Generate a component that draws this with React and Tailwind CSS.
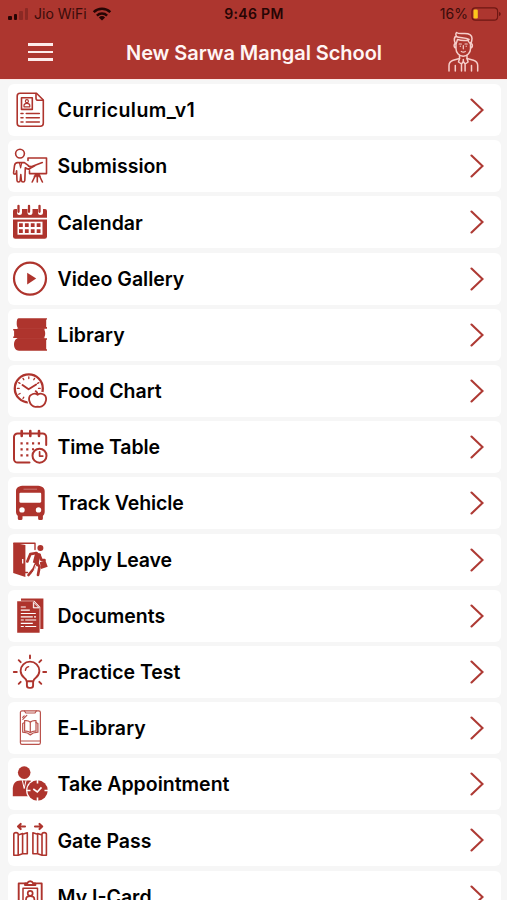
import React from "react";

const strokeProps = {
  fill: "none",
  stroke: "currentColor",
  strokeWidth: 1.6,
  strokeLinecap: "round",
  strokeLinejoin: "round",
};

function Icon({ children }) {
  return (
    <svg viewBox="0 0 36 36" className="size-9 shrink-0 text-[#ae342d]" fill="currentColor" aria-hidden="true">
      {children}
    </svg>
  );
}

function CurriculumIcon() {
  return (
    <Icon>
      <g {...strokeProps}>
        <path d="M8 1.2h16.5l6.8 6.8v23.3a3 3 0 0 1-3 3H8.2a3 3 0 0 1-3-3V4a2.8 2.8 0 0 1 2.8-2.8Z" />
        <path d="M24 1.5v4.8a2 2 0 0 0 2 2h5" />
        <path d="M9.5 5.8h10.8v11.6H9.5z" />
        <path d="M12 14.8v-1.2c0-1.4 1-2.2 2.9-2.2s2.9.8 2.9 2.2v1.2z" strokeWidth="1.2" />
        <circle cx="14.9" cy="9.2" r="1.5" strokeWidth="1.2" />
        <path d="M9 21.5h2M14.3 21.5h13M9 25.8h2M14.3 25.8h13M9 30h2M14.3 30h13" />
      </g>
    </Icon>
  );
}

function SubmissionIcon() {
  return (
    <Icon>
      <g {...strokeProps}>
        <circle cx="8" cy="5.6" r="4.4" />
        <path d="M16.5 17.6 12.4 14.600H5.600c-2 0-2.800 1.200-3.100 3l-.9 7c-.2 1.800 2 2 2.500.3l.5-2.200.4 9.800c.1 2 3 2 3.200 0l.6-6 .6 6c.2 2 3.200 2 3.400 0l.5-12.700 2.500 1.100c1 .4 2 .2 2.500-.8" />
        <path d="M7.500 14.800 8.600 20l1.100-5.200" strokeWidth="1.2" />
        <path d="M16 12.500v-2.500h18.500v15.600H17.500v-2.800M16.500 18.300l3.300.3 10.500-4M16.800 21l6-3.200" />
        <path d="M25.300 26v8M23.800 26.500 20.200 34M26.800 26.500l3.600 7.500" />
        <path d="M23.200 26.300h4.400l1 2.500h-6.400z" fill="currentColor" strokeWidth=".5" />
      </g>
    </Icon>
  );
}

function CalendarIcon() {
  return (
    <Icon>
      <path d="M3 5h30a2 2 0 0 1 2 2v6.700H1V7a2 2 0 0 1 2-2Z" />
      <path d="M1 15.400h34v17a2.300 2.300 0 0 1-2.300 2.300H3.300A2.300 2.300 0 0 1 1 32.400z" />
      <path d="M7.500 3v5.500M18 3v5.500M28.500 3v5.500" stroke="white" strokeWidth="5" strokeLinecap="round" />
      <path d="M6.500 1.800v6M17 1.800v6M27.500 1.800v6" stroke="currentColor" strokeWidth="2.300" strokeLinecap="round" />
      <path d="M5.500 17.700h25v13h-25z" fill="white" />
      <path d="M7 19.300h3.800v3.700H7zM12.900 19.300h3.800v3.700h-3.800zM18.800 19.300h3.800v3.700h-3.800zM24.700 19.300h3.800v3.700h-3.800zM7 25.200h3.800v3.700H7zM12.900 25.200h3.800v3.700h-3.800zM18.800 25.200h3.800v3.700h-3.800zM24.700 25.200h3.800v3.700h-3.800z" />
    </Icon>
  );
}

function VideoIcon() {
  return (
    <Icon>
      <circle cx="18" cy="17.6" r="16" {...strokeProps} strokeWidth="2.2" />
      <path d="M15.200 11.800v11.600l9-5.800z" />
    </Icon>
  );
}

function LibraryIcon() {
  return (
    <Icon>
      <path d="M6.500 1.200H35v1.200h-.8v7.700h.8v1.600H7.500C5.600 11.700 4.700 9 4.700 6.400c0-2.800.4-5.200 1.800-5.200Z" />
      <path d="M1.200 12.100H31.500c1.200.8 1.700 2.400 1.700 4.400 0 2.200-.5 3.700-1.700 4.400H1.200v-1.500h.9v-5.800h-.9z" />
      <path d="M6.500 21.300H35v1.500h-.8v9.500h.8v1.500H7c-3 0-5-2.500-5-6.200 0-3.800 1.800-6.300 4.500-6.300Z" />
      <path d="M5.500 11h27v2h-27zM5.500 20.300h27v1.800h-27z" opacity=".85" />
    </Icon>
  );
}

function FoodIcon() {
  return (
    <Icon>
      <circle cx="16.8" cy="15.4" r="14" {...strokeProps} strokeWidth="2.3" />
      <path {...strokeProps} strokeWidth="1.3" d="M16.800 3.800v1.800M22.600 5.400l-.8 1.300M11 5.400l.8 1.300M26.900 9.600l-1.300.8M6.700 9.600l1.300.8M28.200 15.400h-1.700M5.400 15.400h1.800M6.700 21.300l1.400-.8M11 25.500l.8-1.300" />
      <path {...strokeProps} strokeWidth="1.9" d="m10.500 12 6.100 4.300 7.600-4.800" />
      <path
        d="M25.600 21.800c1.300-1 3-1.400 4.800-.8 2.800.9 4.200 3.700 3.500 6.800-.7 3.300-3.500 6.200-6.300 6-1.400-.1-2.600-.1-4 0-2.800.2-5.600-2.700-6.300-6-.7-3.100.7-5.900 3.500-6.800 1.800-.6 3.500-.2 4.800.8Z"
        fill="white"
        stroke="white"
        strokeWidth="4"
      />
      <path {...strokeProps} strokeWidth="1.8" d="M25.600 21.800c1.300-1 3-1.400 4.800-.8 2.800.9 4.200 3.700 3.500 6.800-.7 3.300-3.500 6.200-6.300 6-1.400-.1-2.600-.1-4 0-2.800.2-5.600-2.700-6.300-6-.7-3.100.7-5.900 3.500-6.800 1.800-.6 3.500-.2 4.800.8Zm0 0c0-1.800-.6-3-1.900-3.700" />
    </Icon>
  );
}

function TimeTableIcon() {
  return (
    <Icon>
      <g {...strokeProps} strokeWidth="2">
        <path d="M17.500 33.500H5.600A3.600 3.600 0 0 1 2 29.900V8a3.600 3.600 0 0 1 3.600-3.600h25A3.600 3.600 0 0 1 34.200 8v8" />
        <circle cx="27.500" cy="26.700" r="7" />
        <path d="M27.600 22.800v4.300h3.200" strokeWidth="1.7" />
      </g>
      <path {...strokeProps} strokeWidth="2.6" d="M9.700 2v5M18.300 2v5M27 2v5" />
      <path d="M8.500 13.200h2.200v2.200H8.500zM14.200 13.200h2.200v2.200h-2.200zM20 13.200h2.200v2.200H20zM25.800 13.200H28v2.200h-2.200zM8.500 19.200h2.200v2.200H8.500zM14.200 19.200h2.200v2.200h-2.200zM20 19.200h2v2h-2zM8.500 25.200h2.200v2.200H8.500zM14.200 25.200h2.200v2.200h-2.200z" />
    </Icon>
  );
}

function BusIcon() {
  return (
    <Icon>
      <path
        fillRule="evenodd"
        d="M12 .7h12.500c4.800 0 8.200 1.500 8.200 5.500v20.600c0 1.500-.5 3-1.800 4v2.700a1.500 1.500 0 0 1-1.500 1.500h-1.800a1.500 1.500 0 0 1-1.500-1.500v-2.200H10.500v2.200A1.500 1.500 0 0 1 9 35H7.300a1.500 1.500 0 0 1-1.500-1.500v-2.700c-1.300-1-1.800-2.500-1.800-4V6.200C4 2.200 7.200.7 12 .7Zm-3.400 7A1.200 1.200 0 0 0 7.400 9v7.600c0 .7.5 1.200 1.200 1.200H28c.7 0 1.200-.5 1.200-1.200V9c0-.8-.5-1.300-1.200-1.300zM10 22.200a2.700 2.700 0 1 0 0 5.400 2.700 2.700 0 0 0 0-5.400Zm16.500 0a2.700 2.700 0 1 0 0 5.400 2.700 2.700 0 0 0 0-5.400Z"
      />
      <path d="M11.500 4.200h13.500" stroke="white" strokeWidth=".8" opacity=".4" />
    </Icon>
  );
}

function LeaveIcon() {
  return (
    <Icon>
      <path d="M1.200.8 13.400 3v32L1.200 31z" />
      <path d="M2 1.200h21v6.300M13 30.500h2.500" {...strokeProps} strokeWidth="1.400" />
      <path d="M10.700 17v4.500" stroke="white" strokeWidth="1.300" />
      <circle cx="28.400" cy="6" r="3" />
      <path d="M24.500 20.500l-2.800 6.300-5.200 6.200M25 21l2.500 4-1.500 8M24.500 11l-6.200 1.200-3 7.200M27.500 13l1.800 4.800 3.200.4" {...strokeProps} strokeWidth="2.700" />
      <path d="m23.500 9.700 5.300 2.300-2.300 10-5.700-1.500z" />
      <path d="m27.800 20.300 5.600-1.900 2.300 6.300-6.600 2.300z" />
      <path d="m23.800 22.800-1.500 5.300-2.300 4.400M20.300 14.300l-1.500 5" stroke="white" strokeWidth=".9" fill="none" />
    </Icon>
  );
}

function DocumentsIcon() {
  return (
    <Icon>
      <path d="M9 .5h22.400v30.500H9z" />
      <path d="M4.800 2.800h17.500l6 6.200v26.200H4.800z" fill="white" />
      <path d="M5.200 3.300h16.200l6.200 6.400v25H5.200z" />
      <path d="M21.300 4v6h6" fill="white" stroke="white" strokeWidth=".7" />
      <path d="m22.200 5.500 3.700 3.700h-3.700z" />
      <path d="M8.800 9h5M8.800 12.200h9M8.800 15.500h15M8.800 18.800h12M22 18.800h2M8.800 22h3M13.200 22h11M8.800 25.300h12M8.800 28.500h3M13.200 28.500h11" stroke="white" strokeWidth="1.200" />
    </Icon>
  );
}

function BulbIcon() {
  return (
    <Icon>
      <g {...strokeProps} strokeWidth="1.9">
        <path d="M14.600 27.200c0-1.700-.8-2.300-2.400-3.500A9 9 0 0 1 8.600 17a9.400 9.400 0 0 1 18.800 0 9 9 0 0 1-3.600 6.700c-1.600 1.200-2.400 1.800-2.400 3.500z" />
        <path d="M14.900 28v3.600c0 1.500 1 2.300 2.300 2.300h1.600c1.300 0 2.300-.8 2.300-2.300V28" />
        <path d="M13.400 16.400c.2-2 1.400-3.200 3.200-3.700" strokeWidth="1.400" />
        <path d="M18 1.500v2.700M1.800 18h3M31.200 18h3M6.700 6.200l2 2M29.300 6.200l-2 2M6.700 29.800l2-2M29.300 29.800l-2-2" />
      </g>
    </Icon>
  );
}

function ELibraryIcon() {
  return (
    <Icon>
      <g {...strokeProps} strokeWidth="1.200" opacity=".85">
        <rect x="8.400" y=".9" width="20" height="33.500" rx="1.600" />
        <path d="M12.500 1l1.300 2h9.200l1.300-2M8.500 31h19.800M10.700 7.400l1.500-1.500M10.800 9.400l4-4" />
        <path d="M18.300 12.200c-1.600-1.500-3.700-1.900-5.700-1.500v10.500c2-.3 4.100 0 5.700 1.500 1.600-1.500 3.700-1.800 5.700-1.500V10.700c-2-.4-4.100 0-5.700 1.500Zm0 0v10.500" />
        <path d="M12.600 12.500l-1.900 1v8.700l4.800.8 2.800 2 2.800-2 4.800-.8v-8.700l-1.900-1" />
      </g>
    </Icon>
  );
}

function AppointmentIcon() {
  return (
    <Icon>
      <circle cx="12.200" cy="6.600" r="6.300" />
      <path d="M.8 30.200v-7.400c0-5 2.700-8.300 7.500-8.300h8c4.800 0 7.400 2.600 7.400 7.600v8.100z" />
      <path d="m10.300 14.200 1.900 8.300 1.900-8.300" stroke="white" strokeWidth="1" fill="none" />
      <circle cx="25.500" cy="24.500" r="11.400" fill="white" />
      <circle cx="25.500" cy="24.500" r="10.200" />
      <path d="M25.500 14v3.500M25.500 31.500V35M15 24.500h3.500M32.500 24.500H36M21.300 23l4 3 4.200-4.600" stroke="white" strokeWidth="1.600" fill="none" />
    </Icon>
  );
}

function GateIcon() {
  return (
    <Icon>
      <g {...strokeProps}>
        <path d="M13 4.500H6M8.700 1.900 6 4.500l2.700 2.600M23 4.500h7.200M27.500 1.900l2.700 2.600-2.700 2.600" strokeWidth="2.100" />
        <path d="M1.800 12.300c0-2.300 4.400-2.300 4.400 0v21H1.800zM6.200 13l4.400-1.500v20.300l-4.400 1.400M10.600 12.200l4.700-1.500v21h-4.700" />
        <path d="M34.400 12.300c0-2.300-4.400-2.300-4.400 0v21h4.400zM30 13l-4.400-1.500v20.300l4.400 1.400M25.600 12.200l-4.700-1.500v21h4.700" />
      </g>
    </Icon>
  );
}

function CardIcon() {
  return (
    <Icon>
      <g {...strokeProps} strokeWidth="1.900">
        <path d="M13 4.400H6.700v31M23.400 4.400h6.300v31M13 6V4.200h2.400a3 3 0 0 1 5.600 0h2.400V6z" />
        <path d="M11 36V9.300h14.500V36" strokeWidth="1.500" />
        <circle cx="18.200" cy="14.300" r="2.500" strokeWidth="1.700" />
        <path d="M14 22v-1.500c0-2 1.700-3.300 4.200-3.300s4.200 1.300 4.200 3.300V22" strokeWidth="1.700" />
      </g>
    </Icon>
  );
}

const menuItems = [
  { label: "Curriculum_v1", icon: CurriculumIcon, tracking: "tracking-[0.4px]" },
  { label: "Submission", icon: SubmissionIcon },
  { label: "Calendar", icon: CalendarIcon },
  { label: "Video Gallery", icon: VideoIcon },
  { label: "Library", icon: LibraryIcon, tracking: "tracking-[0.1px]" },
  { label: "Food Chart", icon: FoodIcon },
  { label: "Time Table", icon: TimeTableIcon, tracking: "tracking-[-0.1px]" },
  { label: "Track Vehicle", icon: BusIcon, tracking: "tracking-[-0.1px]" },
  { label: "Apply Leave", icon: LeaveIcon, tracking: "tracking-[-0.2px]" },
  { label: "Documents", icon: DocumentsIcon },
  { label: "Practice Test", icon: BulbIcon },
  { label: "E-Library", icon: ELibraryIcon, tracking: "tracking-[0.1px]" },
  { label: "Take Appointment", icon: AppointmentIcon },
  { label: "Gate Pass", icon: GateIcon },
  { label: "My I-Card", icon: CardIcon },
];

function StatusBar() {
  return (
    <div className="grid h-[27px] grid-cols-3 items-center pl-2 pr-[6px] text-[14px] leading-none text-[#260504]">
      <div className="flex items-center">
        <div className="flex h-3 items-end gap-[2px]">
          <span className="h-1 w-[3.500px] rounded-[1px] bg-current" />
          <span className="h-[6px] w-[3.500px] rounded-[1px] bg-current" />
          <span className="h-[9px] w-[3.500px] rounded-[1px] bg-current opacity-25" />
          <span className="h-3 w-[3.500px] rounded-[1px] bg-current opacity-25" />
        </div>
        <span className="ml-[6px] opacity-85">Jio WiFi</span>
        <svg viewBox="0 0 20 14" className="ml-[5px] h-[14px] w-5" fill="none" stroke="currentColor" strokeWidth="2.5">
          <path d="M1.700 5.200a12 12 0 0 1 16.600 0M4.900 8.600a7.300 7.300 0 0 1 10.200 0" />
          <path d="m10 13.600-3.100-3.200a4.400 4.400 0 0 1 6.200 0z" fill="currentColor" stroke="none" />
        </svg>
      </div>
      <span className="pr-px text-center font-semibold tracking-[0.3px]">9:46 PM</span>
      <div className="flex items-center justify-end">
        <span className="opacity-85">16%</span>
        <svg viewBox="0 0 30 14" className="ml-[3px] h-[14px] w-[30px]" fill="none">
          <rect x="1" y=".8" width="25.600" height="12.400" rx="3.400" stroke="#6e1713" strokeWidth="1.200" />
          <rect x="2.500" y="2.400" width="4.300" height="9.200" rx="1.300" fill="#fcc71c" />
          <path d="M28 5v4c1.200-.4 1.700-1.100 1.700-2S29.200 5.400 28 5Z" fill="#6e1713" />
        </svg>
      </div>
    </div>
  );
}

function Avatar() {
  return (
    <svg
      viewBox="0 0 32 42"
      className="h-[42px] w-8"
      fill="none"
      stroke="#f6cfcb"
      strokeWidth="1.500"
      strokeLinecap="round"
      strokeLinejoin="round"
    >
      <path d="M7.300 12.500C5.800 9 6.500 6 8.300 5 7.500 3.500 7.800 2.200 8.500 1.500c2 1.500 4.500 1 8 1 4.500 0 7.500 1.500 7.500 5 0 2-.5 3.500-1 5" />
      <path d="M8 5.500c4 2 9 .5 13 3M8 12.500c1-1.500 1-3 1.500-4 4 1.300 7 1.300 10.500.7.3 1.300 1 2.500 2.200 3.300" />
      <path d="M8 11.500v6.300c0 4.200 3.200 7.400 7.200 7.400s7.300-3.200 7.300-7.400v-6.300M8 12.500c-2.500-.3-2.500 4.300 0 4.500M22.500 12.500c2.500-.3 2.500 4.300 0 4.500" />
      <path d="M11.200 13h2.200M17 13h2.200M12.300 15v.3M18.200 15v.3M15.300 14.500v3.300M13.300 20.500c1.300.8 2.700.8 4 0" strokeWidth="1.200" />
      <path d="M11.500 24.500v3L5.200 29.200C2.500 30 1 31.700 1 34.500V40M19 24.500v3l6.500 1.700c2.700.8 4.200 2.500 4.200 5.300V40M7.300 34.500V40M23.500 34.500V40" />
      <path d="m11.500 27.500-1 3.500 3 2 1.800-2.500 1.800 2.500 3-2-1.100-3.500M13.500 33v7M17.100 33v7M15.300 30.500v-2" />
    </svg>
  );
}

function Header() {
  return (
    <header className="h-[79px] shrink-0 bg-[#ad362f]">
      <StatusBar />
      <div className="grid h-[50px] grid-cols-[1fr_auto_1fr] items-center pl-7 pr-[27px]">
        <button aria-label="Menu" className="flex w-[25px] flex-col gap-[5px]">
          <span className="h-[2.500px] w-full bg-[#fdeceb]" />
          <span className="h-[2.500px] w-full bg-[#fdeceb]" />
          <span className="h-[2.500px] w-full bg-[#fdeceb]" />
        </button>
        <h1 className="pt-px text-[20px] font-semibold tracking-[-0.060px] text-[#fff5f4]">New Sarwa Mangal School</h1>
        <div className="flex justify-end">
          <Avatar />
        </div>
      </div>
    </header>
  );
}

function MenuRow({ label, icon: MenuIcon, tracking = "tracking-normal" }) {
  return (
    <li className="flex h-[52px] shrink-0 items-center rounded-[6px] bg-white pl-1 pr-[17px]">
      <MenuIcon />
      <span className={`ml-[9.500px] flex-1 pt-[1.500px] text-[19.500px] font-semibold text-black ${tracking}`}>{label}</span>
      <svg viewBox="0 0 14 24" className="h-6 w-[14px]" fill="none" stroke="#ae3a34" strokeWidth="2.100" strokeLinecap="round">
        <path d="m1.500 1.500 11 10.500-11 10.500" />
      </svg>
    </li>
  );
}

export default function App() {
  return (
    <div className="flex h-[900px] w-[507px] flex-col overflow-hidden bg-[#f6f6f6] font-['Inter','Liberation_Sans',sans-serif]">
      <Header />
      <ul className="flex flex-col gap-[4.200px] border-t border-[#fde9e7] pl-2 pr-[6.500px] pt-1">
        {menuItems.map((item) => (
          <MenuRow key={item.label} {...item} />
        ))}
      </ul>
    </div>
  );
}
